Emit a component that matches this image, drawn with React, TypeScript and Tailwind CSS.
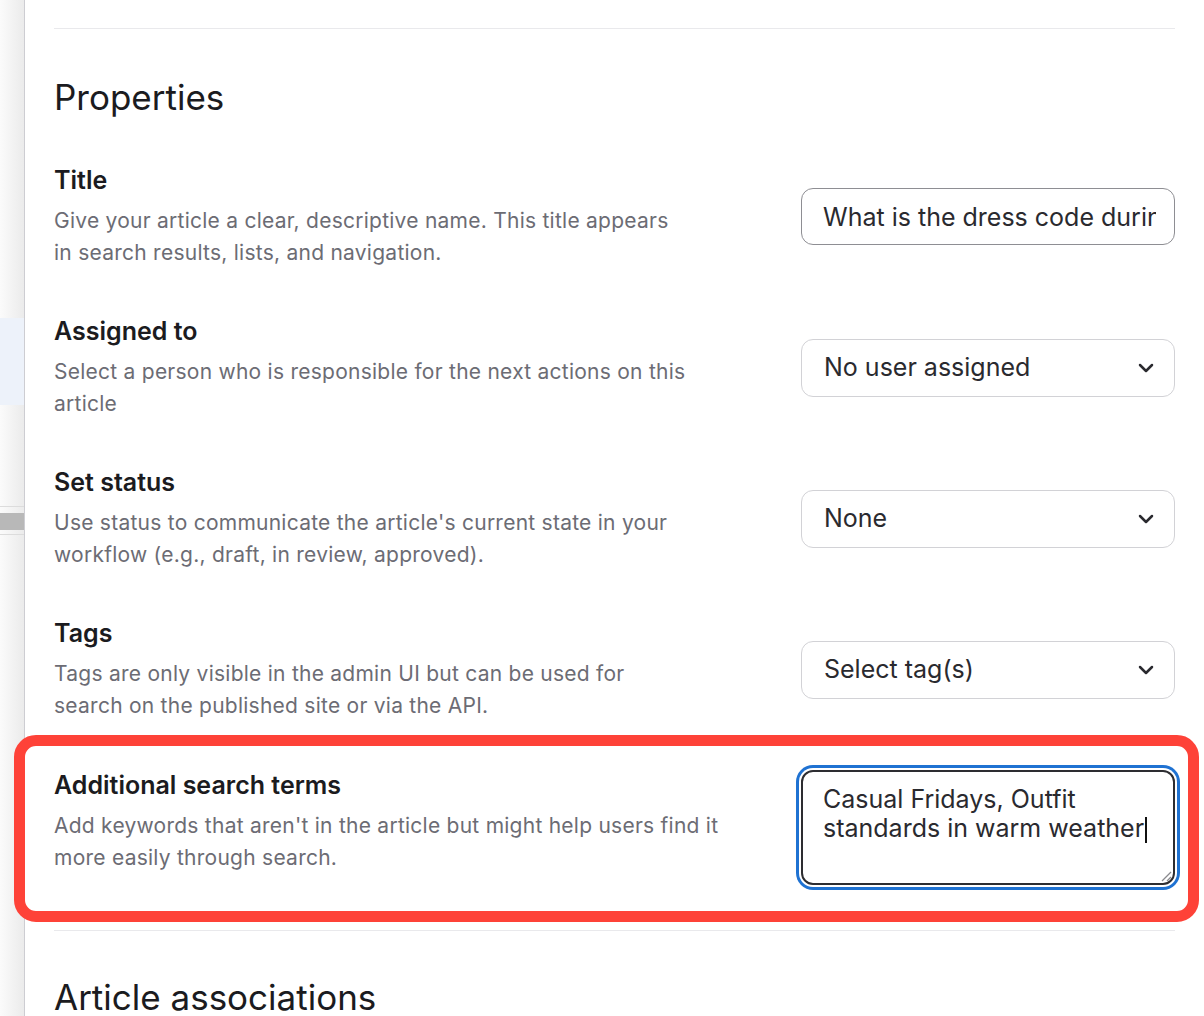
import { ChevronDown } from "lucide-react";

type Field = {
  label: string;
  help: string[];
  kind: "input" | "select";
  value: string;
};

const fields: Field[] = [
  {
    label: "Title",
    help: ["Give your article a clear, descriptive name. This title appears", "in search results, lists, and navigation."],
    kind: "input",
    value: "What is the dress code during summer months?",
  },
  {
    label: "Assigned to",
    help: ["Select a person who is responsible for the next actions on this", "article"],
    kind: "select",
    value: "No user assigned",
  },
  {
    label: "Set status",
    help: ["Use status to communicate the article's current state in your", "workflow (e.g., draft, in review, approved)."],
    kind: "select",
    value: "None",
  },
  {
    label: "Tags",
    help: ["Tags are only visible in the admin UI but can be used for", "search on the published site or via the API."],
    kind: "select",
    value: "Select tag(s)",
  },
];

function FieldText({ label, help }: { label: string; help: string[] }) {
  return (
    <div className="w-[700px]">
      <div className="text-[25px] leading-[32px] font-semibold text-[#1b1b20]">{label}</div>
      <p className="mt-[9px] text-[21px] leading-[32px] tracking-[0.25px] text-[#6c6c74]">
        {help.map((line, i) => (
          <span key={i} className="block whitespace-nowrap">{line}</span>
        ))}
      </p>
    </div>
  );
}

function Control({ f }: { f: Field }) {
  if (f.kind === "input") {
    return (
      <input
        readOnly
        value={f.value}
        className="h-[57px] w-[374px] rounded-[12px] border-[1.5px] border-[#8e8e93] bg-white pl-[21px] pr-[18px] text-[25px] text-[#2a2a2f] outline-none"
      />
    );
  }
  return (
    <div className="flex h-[58px] w-[374px] items-center justify-between rounded-[12px] border border-[#d2d2d6] bg-white pl-[22px] pr-[16px] text-[25px] text-[#2a2a2f]">
      <span>{f.value}</span>
      <ChevronDown size={24} strokeWidth={2.5} className="text-[#2a2a2f]" />
    </div>
  );
}

export default function App() {
  return (
    <div
      className="flex h-[1016px] w-full overflow-hidden bg-white"
      style={{ fontFamily: "Inter, 'Noto Sans', sans-serif" }}
    >
      {/* page behind the panel */}
      <div className="relative w-[24px] shrink-0 bg-gradient-to-r from-[#fbfbfb] to-[#ebebeb]">
        <div className="mt-[318px] h-[87px] bg-[#edf2fa]" />
        <div className="mt-[101px] h-px bg-[#dcdcdc]" />
        <div className="mt-[6px] h-[17px] bg-[#b8b8b8]" />
        <div className="mt-[4px] h-px bg-[#dcdcdc]" />
      </div>

      <div className="flex-1 border-l border-[#cdcdd2] bg-white pl-[29px] pr-[29px] pt-[28px]">
        <div className="border-t border-[#e9e9ec]" />

        <h2 className="mt-[46px] text-[35px] leading-[44px] font-normal text-[#1b1b20]">Properties</h2>

        <div className="mt-[45px] flex flex-col gap-[46px]">
          {fields.map((f) => (
            <div key={f.label} className="flex items-center justify-between">
              <FieldText label={f.label} help={f.help} />
              <Control f={f} />
            </div>
          ))}
        </div>

        <div className="relative mt-[47px] flex items-start justify-between">
          {/* highlight annotation */}
          <div className="pointer-events-none absolute -left-[40px] -right-[24px] -top-[34px] -bottom-[37px] rounded-[22px] border-[11px] border-[#fe4238]" />
          <FieldText
            label="Additional search terms"
            help={["Add keywords that aren't in the article but might help users find it", "more easily through search."]}
          />
          <div className="relative mt-[1px] h-[115px] w-[374px] shrink-0 rounded-[12px] border-2 border-[#2d2d31] bg-white pl-[20px] pr-[18px] pt-[13px] text-[25px] leading-[29px] text-[#2a2a2f] shadow-[0_0_0_2px_#ffffff,0_0_0_5px_#1f72d2]">
            Casual Fridays, Outfit standards in warm weather
            <span className="ml-[1px] inline-block h-[26px] w-[2px] align-text-bottom bg-[#111]" />
            <svg width="14" height="14" viewBox="0 0 14 14" className="absolute bottom-[1px] right-[1px]">
              <path d="M13 4 4 13M13 9 9 13" stroke="#8a8a8e" strokeWidth="1.3" fill="none" />
            </svg>
          </div>
        </div>

        <div className="mt-[45px] border-t border-[#e9e9ec]" />

        <h2 className="mt-[44px] text-[35px] leading-[44px] font-normal text-[#1b1b20]">Article associations</h2>
      </div>
    </div>
  );
}
